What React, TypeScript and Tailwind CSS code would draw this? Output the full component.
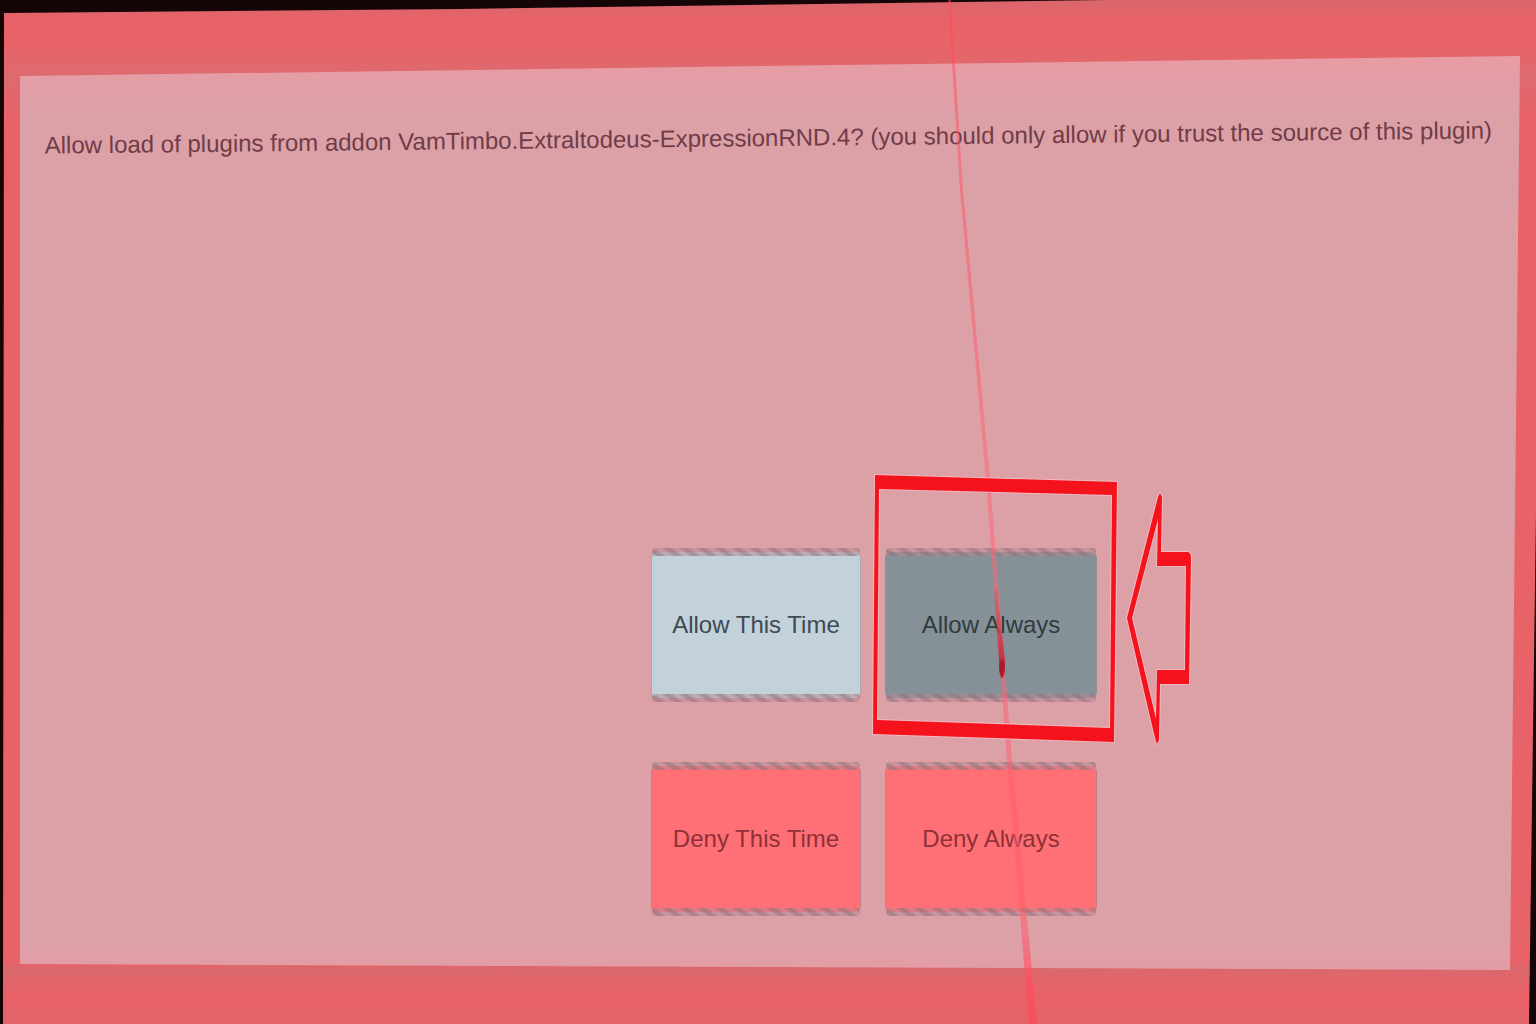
import { ReactNode } from 'react';

const tones = {
  allow: 'bg-[#c3d1db] text-[#3d4a50]',
  active: 'bg-[#869197] text-[#2f3b3d]',
  deny: 'bg-[#ff7076] text-[#8f3038]',
};

// Slanted dashes that run along the upper and lower edge of a button
function RoughEdge({ side }: { side: 'top' | 'bottom' }) {
  return (
    <span
      aria-hidden="true"
      className={`absolute inset-x-0 h-2 rounded-sm bg-[#b08890]/35 bg-[repeating-linear-gradient(35deg,#e09aa233_0px,#8a707a99_5px,#e09aa233_10px)] ${
        side === 'top' ? '-top-1' : '-bottom-1'
      }`}
    />
  );
}

function ChoiceButton({ tone, children }: { tone: keyof typeof tones; children: ReactNode }) {
  return (
    <button
      type="button"
      className={`relative h-full w-full rounded-md border-x border-[#9a8890]/60 text-2xl whitespace-nowrap ${tones[tone]}`}
    >
      <RoughEdge side="top" />
      {children}
      <RoughEdge side="bottom" />
    </button>
  );
}

// Pointer beam plus the red frame and arrow around "Allow Always"
function Overlay() {
  return (
    <svg
      aria-hidden="true"
      viewBox="0 0 1536 1024"
      preserveAspectRatio="none"
      className="pointer-events-none absolute inset-0 h-full w-full"
    >
      <defs>
        <linearGradient id="beam" x1="0" y1="0" x2="0" y2="1">
          <stop offset="0" stopColor="#ff4a58" stopOpacity="0.5" />
          <stop offset="0.5" stopColor="#ff6878" stopOpacity="0.55" />
          <stop offset="0.9" stopColor="#ff5868" stopOpacity="0.5" />
          <stop offset="1" stopColor="#ff4858" stopOpacity="0.8" />
        </linearGradient>
        <linearGradient id="beam-tip" x1="0" y1="0" x2="0" y2="1">
          <stop offset="0" stopColor="#d8404e" stopOpacity="0.3" />
          <stop offset="1" stopColor="#c01828" stopOpacity="0.9" />
        </linearGradient>
      </defs>
      <path
        d="M948 0 L951 0 L963 190 L990 480 L1005 668 L1012 760 L1037 1024 L1029 1024 L1007 760 L1000 668 L986 480 L960 190 Z"
        fill="url(#beam)"
      />
      <path d="M994 590 L997 590 L1005 660 Q1005 678 1002 678 Q999 678 999 660 Z" fill="url(#beam-tip)" />
      <ellipse cx="1002" cy="667" rx="3" ry="8" fill="#a51826" fillOpacity="0.8" />
      <g fill="#f4131c" fillRule="evenodd" stroke="#f3b9c0" strokeWidth="2" paintOrder="stroke">
        <path d="M875 475 L1117 482 L1114 742 L873 734 Z M879 489 L877 720 L1110 728 L1112 495 Z" />
        <path
          strokeLinejoin="round"
          d="M1160 493 L1162 497 L1161 552 L1188 552 Q1191 553 1191 558 L1189 684 L1160 684 L1159 740 L1157 744 L1155 738 L1127 618 L1158 497 Z M1158 519 L1132 618 L1156 719 L1157 670 L1185 670 L1186 566 L1157 566 Z"
        />
      </g>
    </svg>
  );
}

export default function App() {
  return (
    <main className="relative flex min-h-screen overflow-hidden bg-[#160507] font-['Liberation_Sans',Arial,sans-serif]">
      {/* Red frame, seen slightly from the side */}
      <div className="flex flex-1 bg-[linear-gradient(to_bottom,#d9666c_0px,#ea6268_24px,#e66468_50px,#dd6a70_76px,#e86368_120px,#e86368_calc(100%-60px),#d9686d_calc(100%-56px),#ea6268_calc(100%-30px),#e2646a_100%)] pt-14 pr-4 pb-[54px] pl-5 [clip-path:polygon(4px_13px,30%_9px,72%_0px,100%_0px,100%_50%,calc(100%-7px)_100%,3px_100%)]">
        <section
          aria-labelledby="prompt"
          className="flex flex-1 flex-col bg-[linear-gradient(to_bottom,#e99ba2_0px,#e39ea5_24px,#dca1a7_60px,#dca1a7_calc(100%-30px),#e39ca4_100%)] [clip-path:polygon(0px_20px,100%_0px,calc(100%-10px)_100%,0px_calc(100%-6px))]"
        >
          <h1
            id="prompt"
            className="-rotate-[0.6deg] pt-[66px] pr-1 text-center text-2xl whitespace-nowrap text-[#703c47]"
          >
            Allow load of plugins from addon VamTimbo.Extraltodeus-ExpressionRND.4? (you should only allow if you trust the source of this plugin)
          </h1>

          <div className="mt-auto mb-[58px] grid grid-cols-[210px_212px] grid-rows-[146px_146px] justify-center gap-x-6 gap-y-[68px] pl-52">
            <ChoiceButton tone="allow">Allow This Time</ChoiceButton>
            <ChoiceButton tone="active">Allow Always</ChoiceButton>
            <ChoiceButton tone="deny">Deny This Time</ChoiceButton>
            <ChoiceButton tone="deny">Deny Always</ChoiceButton>
          </div>
        </section>
      </div>
      <Overlay />
    </main>
  );
}
